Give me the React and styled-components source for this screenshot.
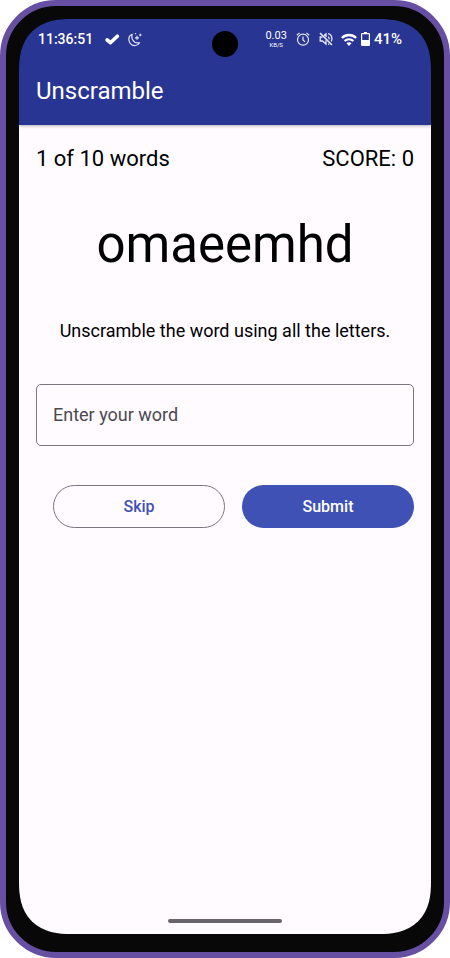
import React, { useState } from "react";
import styled, { createGlobalStyle, css } from "styled-components";

const GlobalStyle = createGlobalStyle`
  *, *::before, *::after { box-sizing: border-box; }
  body { margin: 0; background: #ffffff; }
  body, button, input { font-family: Roboto, "Liberation Sans", sans-serif; }
`;

const Phone = styled.div`
  min-height: 100vh;
  display: flex;
  background: #080808;
  border: 6px solid #674fa3;
  border-radius: 56px;
  padding: 13px 13px 18px;
`;

const Screen = styled.div`
  flex: 1;
  min-width: 0;
  display: flex;
  flex-direction: column;
  border-radius: 42px;
  overflow: hidden;
  @supports (corner-shape: superellipse(1.3)) {
    border-radius: 52px;
    corner-shape: superellipse(1.3);
  }
`;

const Header = styled.header`
  position: relative;
  background: #293593;
  color: #ffffff;
  box-shadow: 0 1px 3px rgba(0, 0, 0, 0.3);
`;

const StatusBar = styled.div`
  display: grid;
  grid-template-columns: 1fr 26px 1fr;
  align-items: center;
  height: 50px;
  padding: 0 19px;
`;

const StatusGroup = styled.div`
  display: flex;
  align-items: center;
  gap: 12px;
  height: 40px;
  align-self: start;
`;

const StatusEnd = styled(StatusGroup)`
  justify-content: flex-end;
  gap: 8px;
  padding-right: 10px;
`;

const IconCluster = styled.span`
  display: flex;
  align-items: center;
  gap: ${(p) => p.$gap}px;
`;

const StatusText = styled.span`
  font-size: ${(p) => (p.$large ? 15 : 14)}px;
  font-weight: 500;
  line-height: 20px;
  white-space: nowrap;
`;

const Camera = styled.span`
  width: 26px;
  height: 26px;
  border-radius: 50%;
  background: #000000;
`;

const NetSpeed = styled.span`
  display: flex;
  flex-direction: column;
  align-items: center;
  font-size: 11px;
  line-height: 10px;
  small {
    font-size: 6px;
    line-height: 7px;
  }
`;

const AppTitle = styled.h1`
  margin: 0;
  padding: 6px 17px 18px;
  font-size: 24px;
  line-height: 32px;
  font-weight: 400;
`;

const Content = styled.main`
  flex: 1;
  display: flex;
  flex-direction: column;
  padding: 18px 17px 0;
  background: #fffbff;
  color: #000000;
`;

const Stats = styled.div`
  display: flex;
  justify-content: space-between;
  font-size: 22px;
  line-height: 32px;
`;

const Scrambled = styled.p`
  margin: 38px 0 0;
  text-align: center;
  font-size: 51px;
  line-height: 64px;
`;

const Instructions = styled.p`
  margin: 42px 0 0;
  text-align: center;
  font-size: 18px;
  line-height: 24px;
`;

const Form = styled.form`
  display: flex;
  flex-direction: column;
  gap: 39px;
  margin-top: 41px;
`;

const WordInput = styled.input`
  width: 100%;
  height: 62px;
  padding: 0 16px 2px;
  border: 1px solid #7a757f;
  border-radius: 5px;
  background: transparent;
  color: #1c1b1f;
  font-size: 18px;
  &::placeholder { color: #4b4950; opacity: 1; }
`;

const Actions = styled.div`
  display: grid;
  grid-template-columns: 1fr 1fr;
  gap: 17px;
  padding-left: 17px;
`;

const Button = styled.button`
  height: 43px;
  border-radius: 22px;
  font-size: 16px;
  font-weight: 500;
  cursor: pointer;
  ${(p) =>
    p.$filled
      ? css`
          border: 0;
          background: #3f51b5;
          color: #ffffff;
        `
      : css`
          border: 1px solid #7a757f;
          background: transparent;
          color: #3f51b5;
        `}
`;

const HomeIndicator = styled.div`
  width: 114px;
  height: 4px;
  margin: auto auto 11px;
  border-radius: 2px;
  background: #69666b;
`;

const CheckIcon = () => (
  <svg width="15" height="14" viewBox="0 0 15 14" aria-hidden="true">
    <path d="M2.200 8 5.400 10.700 12.300 4.200" fill="none" stroke="#fff" strokeWidth="3.600" strokeLinejoin="round" strokeLinecap="round" />
  </svg>
);

const MoonIcon = () => (
  <svg width="14" height="15" viewBox="0 0 14 15" fill="none" stroke="#dfe1f2" aria-hidden="true">
    <path d="M4.200 2.200C1.600 3.300.5 6 1 8.600c.6 3.200 3.500 5.300 6.500 4.900 1.800-.2 3.200-1.200 4.100-2.700-3.200.6-5.700-.5-7-3-.9-1.800-1-3.700-.4-5.600Z" strokeWidth="1.200" strokeLinejoin="round" />
    <path d="M9 3.800v4M7 5.800h4M12.300 1.800v2.400M11.100 3h2.400M7.500.9v1.400" strokeWidth="1.200" />
  </svg>
);

const AlarmIcon = () => (
  <svg width="14" height="14" viewBox="0 0 14 14" fill="none" stroke="#e6e8f5" strokeWidth="1.200" aria-hidden="true">
    <circle cx="7" cy="7.700" r="5.500" />
    <path d="M7 4.400v3.500l2 2M.8 3.200 3.600.9M13.200 3.200 10.400.9" />
  </svg>
);

const MutedIcon = () => (
  <svg width="14" height="14" viewBox="0 0 14 14" fill="none" stroke="#e6e8f5" strokeWidth="1.300" aria-hidden="true">
    <path d="M1 1l12 12" strokeWidth="1.600" />
    <path d="M3.500 5H1.200v4h2.300L7 12V8.300M5 3.400 7 1.900v3.400" />
    <path d="M9 4.700c.9.500 1.300 1.400 1.200 2.700M9 1.600c2.800.8 4.200 3 3.800 5.800-.1.800-.3 1.400-.7 2M9 12.300l1.300-.5" />
  </svg>
);

const WifiIcon = () => (
  <svg width="16" height="13" viewBox="0 0 16 13" fill="none" stroke="#fff" strokeWidth="2.300" aria-hidden="true">
    <path d="M.9 5c4.200-4 10-4 14.200 0M3.600 8c2.500-2.300 6.300-2.300 8.800 0" />
    <path d="M5.500 10.300c1.500-1.300 3.500-1.300 5 0L8 12.900Z" fill="#fff" stroke="none" />
  </svg>
);

const BatteryIcon = () => (
  <svg width="9" height="14" viewBox="0 0 9 14" aria-hidden="true">
    <path d="M3 0h3v1.500H3z" fill="#fff" />
    <rect x=".6" y="1.600" width="7.800" height="11.800" rx=".6" fill="none" stroke="#fff" strokeWidth="1.200" />
    <path d="M1 8h7v5H1z" fill="#fff" />
  </svg>
);

export default function App() {
  const [word, setWord] = useState("");
  return (
    <>
      <GlobalStyle />
      <Phone>
        <Screen>
          <Header>
            <StatusBar>
              <StatusGroup>
                <StatusText>11:36:51</StatusText>
                <IconCluster $gap={8}>
                  <CheckIcon />
                  <MoonIcon />
                </IconCluster>
              </StatusGroup>
              <Camera />
              <StatusEnd>
                <IconCluster $gap={9}>
                  <NetSpeed>
                    0.03<small>KB/S</small>
                  </NetSpeed>
                  <AlarmIcon />
                  <MutedIcon />
                </IconCluster>
                <IconCluster $gap={4}>
                  <WifiIcon />
                  <BatteryIcon />
                  <StatusText $large>41%</StatusText>
                </IconCluster>
              </StatusEnd>
            </StatusBar>
            <AppTitle>Unscramble</AppTitle>
          </Header>
          <Content>
            <Stats>
              <span>1 of 10 words</span>
              <span>SCORE: 0</span>
            </Stats>
            <Scrambled>omaeemhd</Scrambled>
            <Instructions>Unscramble the word using all the letters.</Instructions>
            <Form onSubmit={(e) => e.preventDefault()}>
              <WordInput
                aria-label="Enter your word"
                placeholder="Enter your word"
                value={word}
                onChange={(e) => setWord(e.target.value)}
              />
              <Actions>
                <Button type="button" onClick={() => setWord("")}>Skip</Button>
                <Button type="submit" $filled>Submit</Button>
              </Actions>
            </Form>
            <HomeIndicator />
          </Content>
        </Screen>
      </Phone>
    </>
  );
}
